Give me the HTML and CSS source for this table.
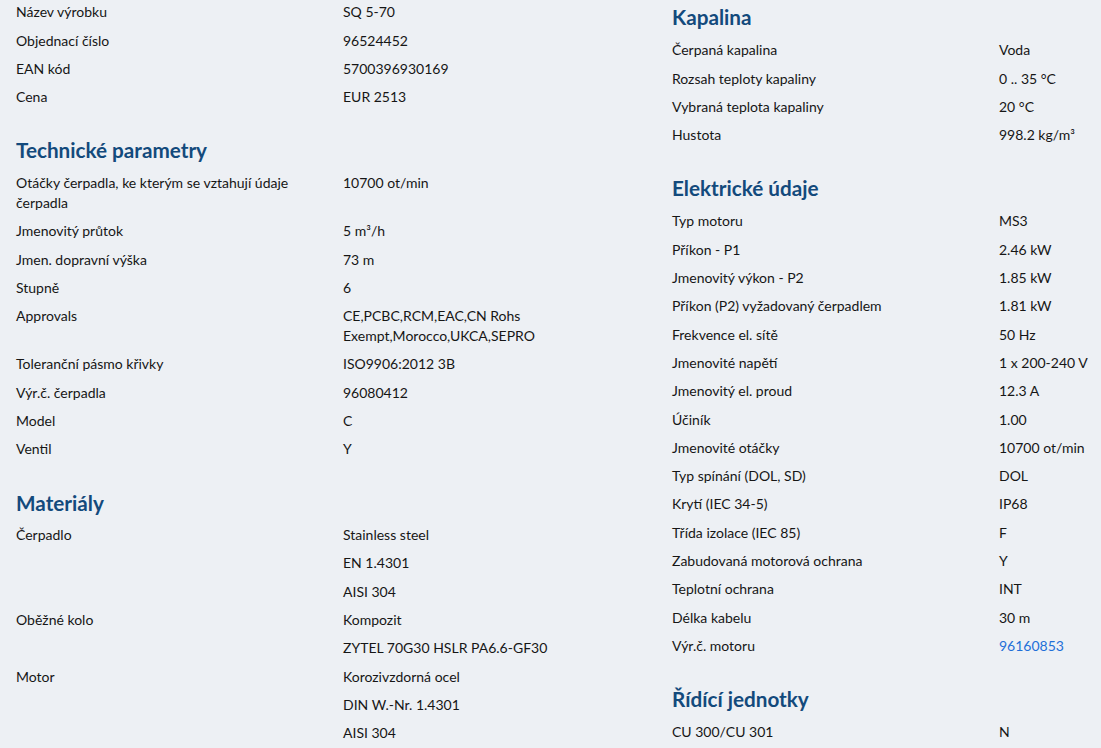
FILE: index.html
```html
<!DOCTYPE html>
<html lang="cs">
<head>
<meta charset="utf-8">
<link rel="stylesheet" href="styles.css">
</head>
<body>
<div class="page">
  <div class="col col-left">
    <section class="sec">
      <div class="row"><div class="lbl">Název výrobku</div><div class="val">SQ 5-70</div></div>
      <div class="row"><div class="lbl">Objednací číslo</div><div class="val">96524452</div></div>
      <div class="row"><div class="lbl">EAN kód</div><div class="val">5700396930169</div></div>
      <div class="row"><div class="lbl">Cena</div><div class="val">EUR 2513</div></div>
    </section>
    <section class="sec">
      <h2 class="title">Technické parametry</h2>
      <div class="row"><div class="lbl">Otáčky čerpadla, ke kterým se vztahují údaje čerpadla</div><div class="val">10700 ot/min</div></div>
      <div class="row"><div class="lbl">Jmenovitý průtok</div><div class="val">5 m³/h</div></div>
      <div class="row"><div class="lbl">Jmen. dopravní výška</div><div class="val">73 m</div></div>
      <div class="row"><div class="lbl">Stupně</div><div class="val">6</div></div>
      <div class="row"><div class="lbl">Approvals</div><div class="val">CE,PCBC,RCM,EAC,CN Rohs Exempt,Morocco,UKCA,SEPRO</div></div>
      <div class="row"><div class="lbl">Toleranční pásmo křivky</div><div class="val">ISO9906:2012 3B</div></div>
      <div class="row"><div class="lbl">Výr.č. čerpadla</div><div class="val">96080412</div></div>
      <div class="row"><div class="lbl">Model</div><div class="val">C</div></div>
      <div class="row"><div class="lbl">Ventil</div><div class="val">Y</div></div>
    </section>
    <section class="sec">
      <h2 class="title">Materiály</h2>
      <div class="row"><div class="lbl">Čerpadlo</div><div class="val">Stainless steel</div></div>
      <div class="row"><div class="lbl"></div><div class="val">EN 1.4301</div></div>
      <div class="row"><div class="lbl"></div><div class="val">AISI 304</div></div>
      <div class="row"><div class="lbl">Oběžné kolo</div><div class="val">Kompozit</div></div>
      <div class="row"><div class="lbl"></div><div class="val">ZYTEL 70G30 HSLR PA6.6-GF30</div></div>
      <div class="row"><div class="lbl">Motor</div><div class="val">Korozivzdorná ocel</div></div>
      <div class="row"><div class="lbl"></div><div class="val">DIN W.-Nr. 1.4301</div></div>
      <div class="row"><div class="lbl"></div><div class="val">AISI 304</div></div>
    </section>
  </div>
  <div class="col col-right">
    <section class="sec">
      <h2 class="title">Kapalina</h2>
      <div class="row"><div class="lbl">Čerpaná kapalina</div><div class="val">Voda</div></div>
      <div class="row"><div class="lbl">Rozsah teploty kapaliny</div><div class="val">0 .. 35 °C</div></div>
      <div class="row"><div class="lbl">Vybraná teplota kapaliny</div><div class="val">20 °C</div></div>
      <div class="row"><div class="lbl">Hustota</div><div class="val">998.2 kg/m³</div></div>
    </section>
    <section class="sec">
      <h2 class="title">Elektrické údaje</h2>
      <div class="row"><div class="lbl">Typ motoru</div><div class="val">MS3</div></div>
      <div class="row"><div class="lbl">Příkon - P1</div><div class="val">2.46 kW</div></div>
      <div class="row"><div class="lbl">Jmenovitý výkon - P2</div><div class="val">1.85 kW</div></div>
      <div class="row"><div class="lbl">Příkon (P2) vyžadovaný čerpadlem</div><div class="val">1.81 kW</div></div>
      <div class="row"><div class="lbl">Frekvence el. sítě</div><div class="val">50 Hz</div></div>
      <div class="row"><div class="lbl">Jmenovité napětí</div><div class="val">1 x 200-240 V</div></div>
      <div class="row"><div class="lbl">Jmenovitý el. proud</div><div class="val">12.3 A</div></div>
      <div class="row"><div class="lbl">Účiník</div><div class="val">1.00</div></div>
      <div class="row"><div class="lbl">Jmenovité otáčky</div><div class="val">10700 ot/min</div></div>
      <div class="row"><div class="lbl">Typ spínání (DOL, SD)</div><div class="val">DOL</div></div>
      <div class="row"><div class="lbl">Krytí (IEC 34-5)</div><div class="val">IP68</div></div>
      <div class="row"><div class="lbl">Třída izolace (IEC 85)</div><div class="val">F</div></div>
      <div class="row"><div class="lbl">Zabudovaná motorová ochrana</div><div class="val">Y</div></div>
      <div class="row"><div class="lbl">Teplotní ochrana</div><div class="val">INT</div></div>
      <div class="row"><div class="lbl">Délka kabelu</div><div class="val">30 m</div></div>
      <div class="row"><div class="lbl">Výr.č. motoru</div><div class="val"><a class="link" href="#">96160853</a></div></div>
    </section>
    <section class="sec">
      <h2 class="title">Řídící jednotky</h2>
      <div class="row"><div class="lbl">CU 300/CU 301</div><div class="val">N</div></div>
    </section>
  </div>
</div>
</body>
</html>
```

FILE: styles.css
```css
html, body {
  margin: 0;
  padding: 0;
  background: #edf0f4;
}
body {
  font-family: Lato, "Noto Sans", sans-serif;
  font-size: 14px;
  color: #161616;
  overflow: hidden;
}
.page {
  display: grid;
  grid-template-columns: 656px 1fr;
  padding-left: 16px;
}
.col-left {
  padding-right: 16px;
  margin-top: -2px;
}
.sec + .sec {
  margin-top: 25px;
}
.col-left .sec:last-child {
  margin-top: 25.5px;
}
.title {
  margin: 0 0 5px;
  font-size: 20.7px;
  line-height: 28px;
  font-weight: 700;
  color: #134a7c;
}
.col-left .sec:last-child .title {
  margin-bottom: 4px;
}
.col-right .sec:first-child .title {
  margin-top: 3px;
}
.row {
  display: grid;
  grid-template-columns: 327px 1fr;
  padding: 4.3px 0;
  line-height: 19.7px;
}
.lbl {
  padding-right: 16px;
}
.col-left .val {
  padding-right: 16px;
}
.col-right .val {
  white-space: nowrap;
}
.link {
  color: #1f6fd8;
  text-decoration: none;
}
```
